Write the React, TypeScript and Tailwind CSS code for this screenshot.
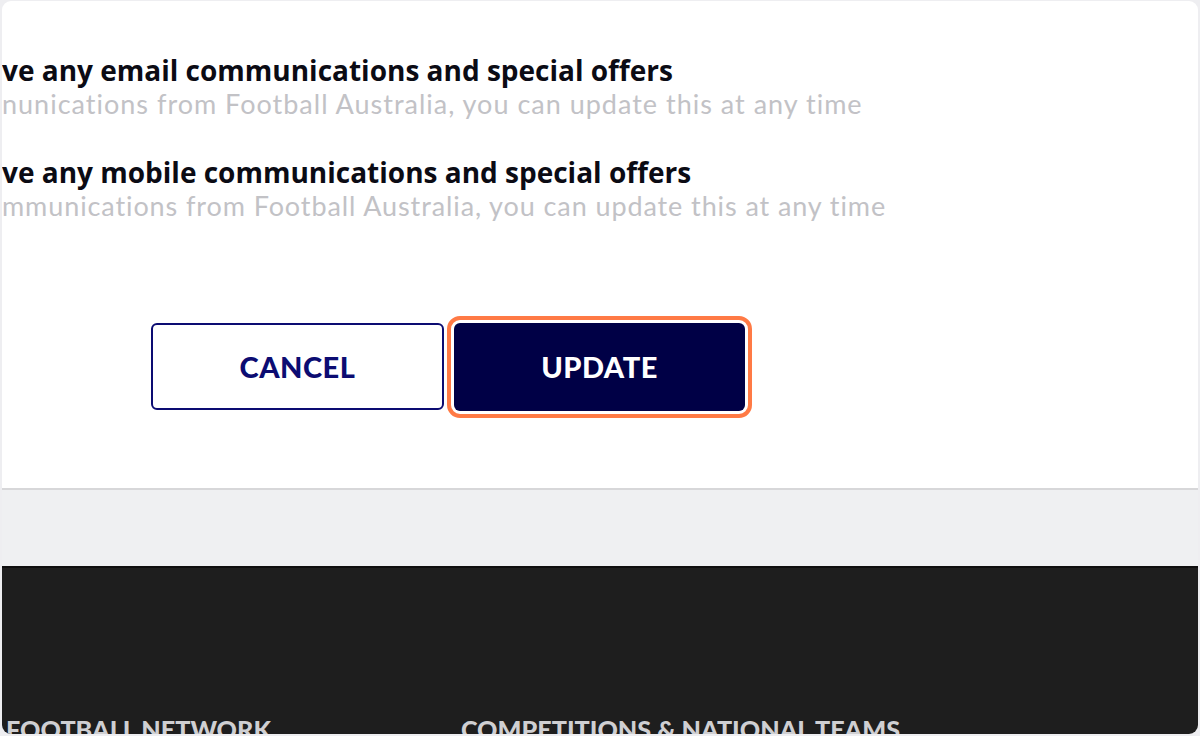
export default function App() {
  return (
    <div className="h-[736px] w-[1200px] bg-[#eeeef1] pl-[2px] pt-[1px] pr-[2px] pb-[2px] font-['Lato','Liberation_Sans',sans-serif]">
      <div className="flex h-full flex-col overflow-hidden rounded-[9px] bg-white">
        {/* Preferences */}
        <div className="h-[489px] shrink-0 overflow-hidden border-b-2 border-[#d7d7d9] pt-[52px]">
          <div className="flex flex-col gap-[34px] whitespace-nowrap">
            <div>
              <p className="font-['Open_Sans',sans-serif] text-[28px] font-bold leading-[34px] text-[#0b0b14]">
                ve any email communications and special offers
              </p>
              <p className="text-[27px] leading-[34px] tracking-[1px] text-[#c2c2c6]">
                nunications from Football Australia, you can update this at any time
              </p>
            </div>
            <div>
              <p className="font-['Open_Sans',sans-serif] text-[28px] font-bold leading-[34px] text-[#0b0b14]">
                ve any mobile communications and special offers
              </p>
              <p className="text-[27px] leading-[34px] tracking-[0.9px] text-[#c2c2c6]">
                mmunications from Football Australia, you can update this at any time
              </p>
            </div>
          </div>

          {/* Actions */}
          <div className="ml-[149px] mt-[100px] flex gap-[10px]">
            <button className="flex h-[87px] w-[293px] items-center justify-center rounded-[6px] border-2 border-[#0c0c72] bg-white text-[29px] font-black tracking-[0.5px] text-[#0c0c72]">
              CANCEL
            </button>
            <button className="flex h-[88px] w-[291px] items-center justify-center rounded-[6px] bg-[#000046] text-[29px] font-black tracking-[0.5px] text-white outline-[4px] outline-offset-[3px] outline-[#ff7a45] outline-solid">
              UPDATE
            </button>
          </div>
        </div>

        {/* Band */}
        <div className="h-[78px] shrink-0 border-b-2 border-[#0f0f0f] bg-[#eff0f2]" />

        {/* Footer */}
        <div className="flex flex-1 items-end bg-[#1e1e1e] pl-[4px]">
          <div className="flex translate-y-[10px] gap-[190px] text-[25.2px] font-black uppercase leading-[30px] text-[#cfcfd2]">
            <span>Football Network</span>
            <span>Competitions &amp; National Teams</span>
          </div>
        </div>
      </div>
    </div>
  );
}
